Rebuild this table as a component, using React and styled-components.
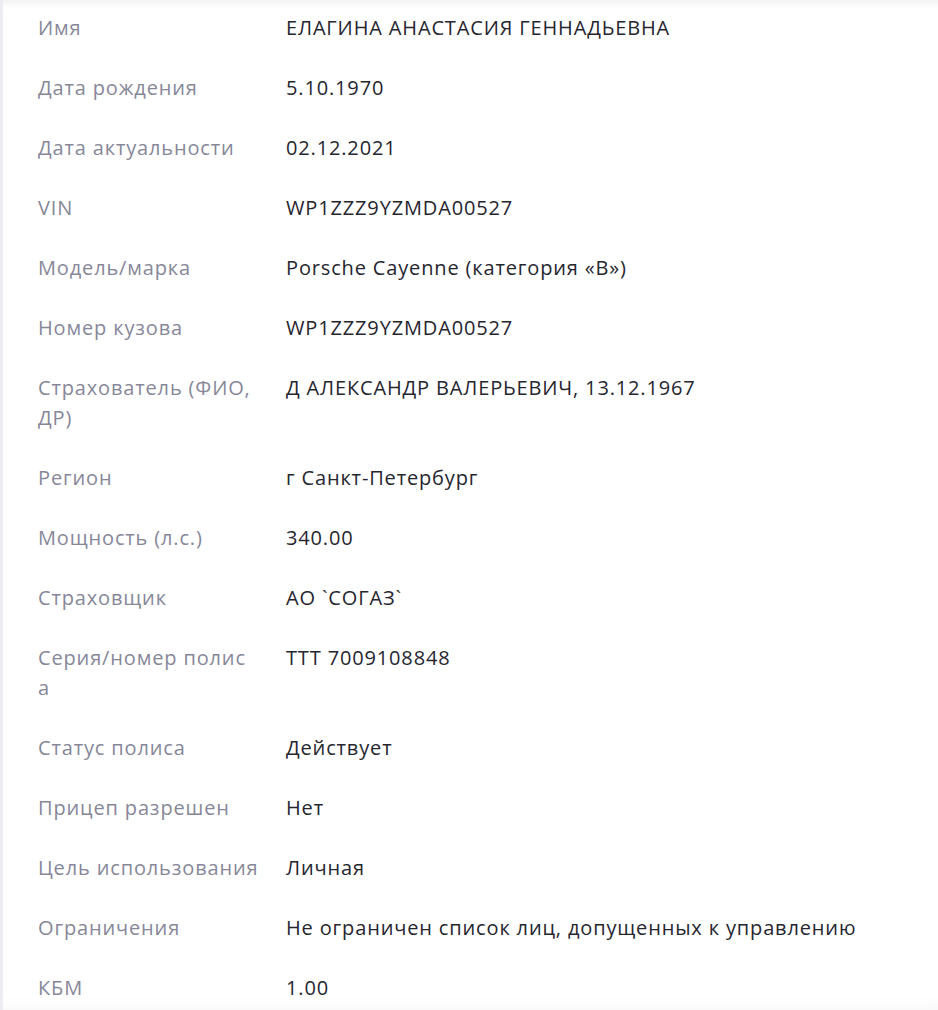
import React from "react";
import styled, { createGlobalStyle } from "styled-components";

const Global = createGlobalStyle`
  html, body {
    margin: 0;
    padding: 0;
    background: #ececf3;
  }
  body {
    font-family: "Open Sans", "Liberation Sans", sans-serif;
  }
`;

const Card = styled.div`
  margin-left: 3px;
  min-height: 1010px;
  background: #fff;
  box-shadow: inset 0 12px 12px -12px rgba(0, 0, 0, 0.1),
    inset 0 -26px 24px -24px rgba(0, 0, 0, 0.07);
  padding: 0 0 0 35px;
  box-sizing: border-box;
  overflow: hidden;
`;

const Table = styled.div`
  display: flex;
  flex-direction: column;
  margin-top: -2px;
`;

const Row = styled.div`
  display: grid;
  grid-template-columns: 248px 1fr;
  padding: 15px 0;
  font-size: 20px;
  line-height: 30px;
  letter-spacing: 0.85px;
`;

const Label = styled.div`
  color: #878799;
  padding-right: 22px;
  overflow-wrap: anywhere;
  white-space: pre-line;
`;

const Value = styled.div`
  color: #26262f;
  white-space: nowrap;
`;

const rows = [
  ["Имя", "ЕЛАГИНА АНАСТАСИЯ ГЕННАДЬЕВНА"],
  ["Дата рождения", "5.10.1970"],
  ["Дата актуальности", "02.12.2021"],
  ["VIN", "WP1ZZZ9YZMDA00527"],
  ["Модель/марка", "Porsche Cayenne (категория «B»)"],
  ["Номер кузова", "WP1ZZZ9YZMDA00527"],
  ["Страхователь (ФИО, ДР)", "Д АЛЕКСАНДР ВАЛЕРЬЕВИЧ, 13.12.1967"],
  ["Регион", "г Санкт-Петербург"],
  ["Мощность (л.с.)", "340.00"],
  ["Страховщик", "АО `СОГАЗ`"],
  ["Серия/номер полис\nа", "ТТТ 7009108848"],
  ["Статус полиса", "Действует"],
  ["Прицеп разрешен", "Нет"],
  ["Цель использования", "Личная"],
  ["Ограничения", "Не ограничен список лиц, допущенных к управлению"],
  ["КБМ", "1.00"],
];

export default function App() {
  return (
    <>
      <Global />
      <Card>
        <Table>
          {rows.map(([label, value]) => (
            <Row key={label}>
              <Label>{label}</Label>
              <Value>{value}</Value>
            </Row>
          ))}
        </Table>
      </Card>
    </>
  );
}
